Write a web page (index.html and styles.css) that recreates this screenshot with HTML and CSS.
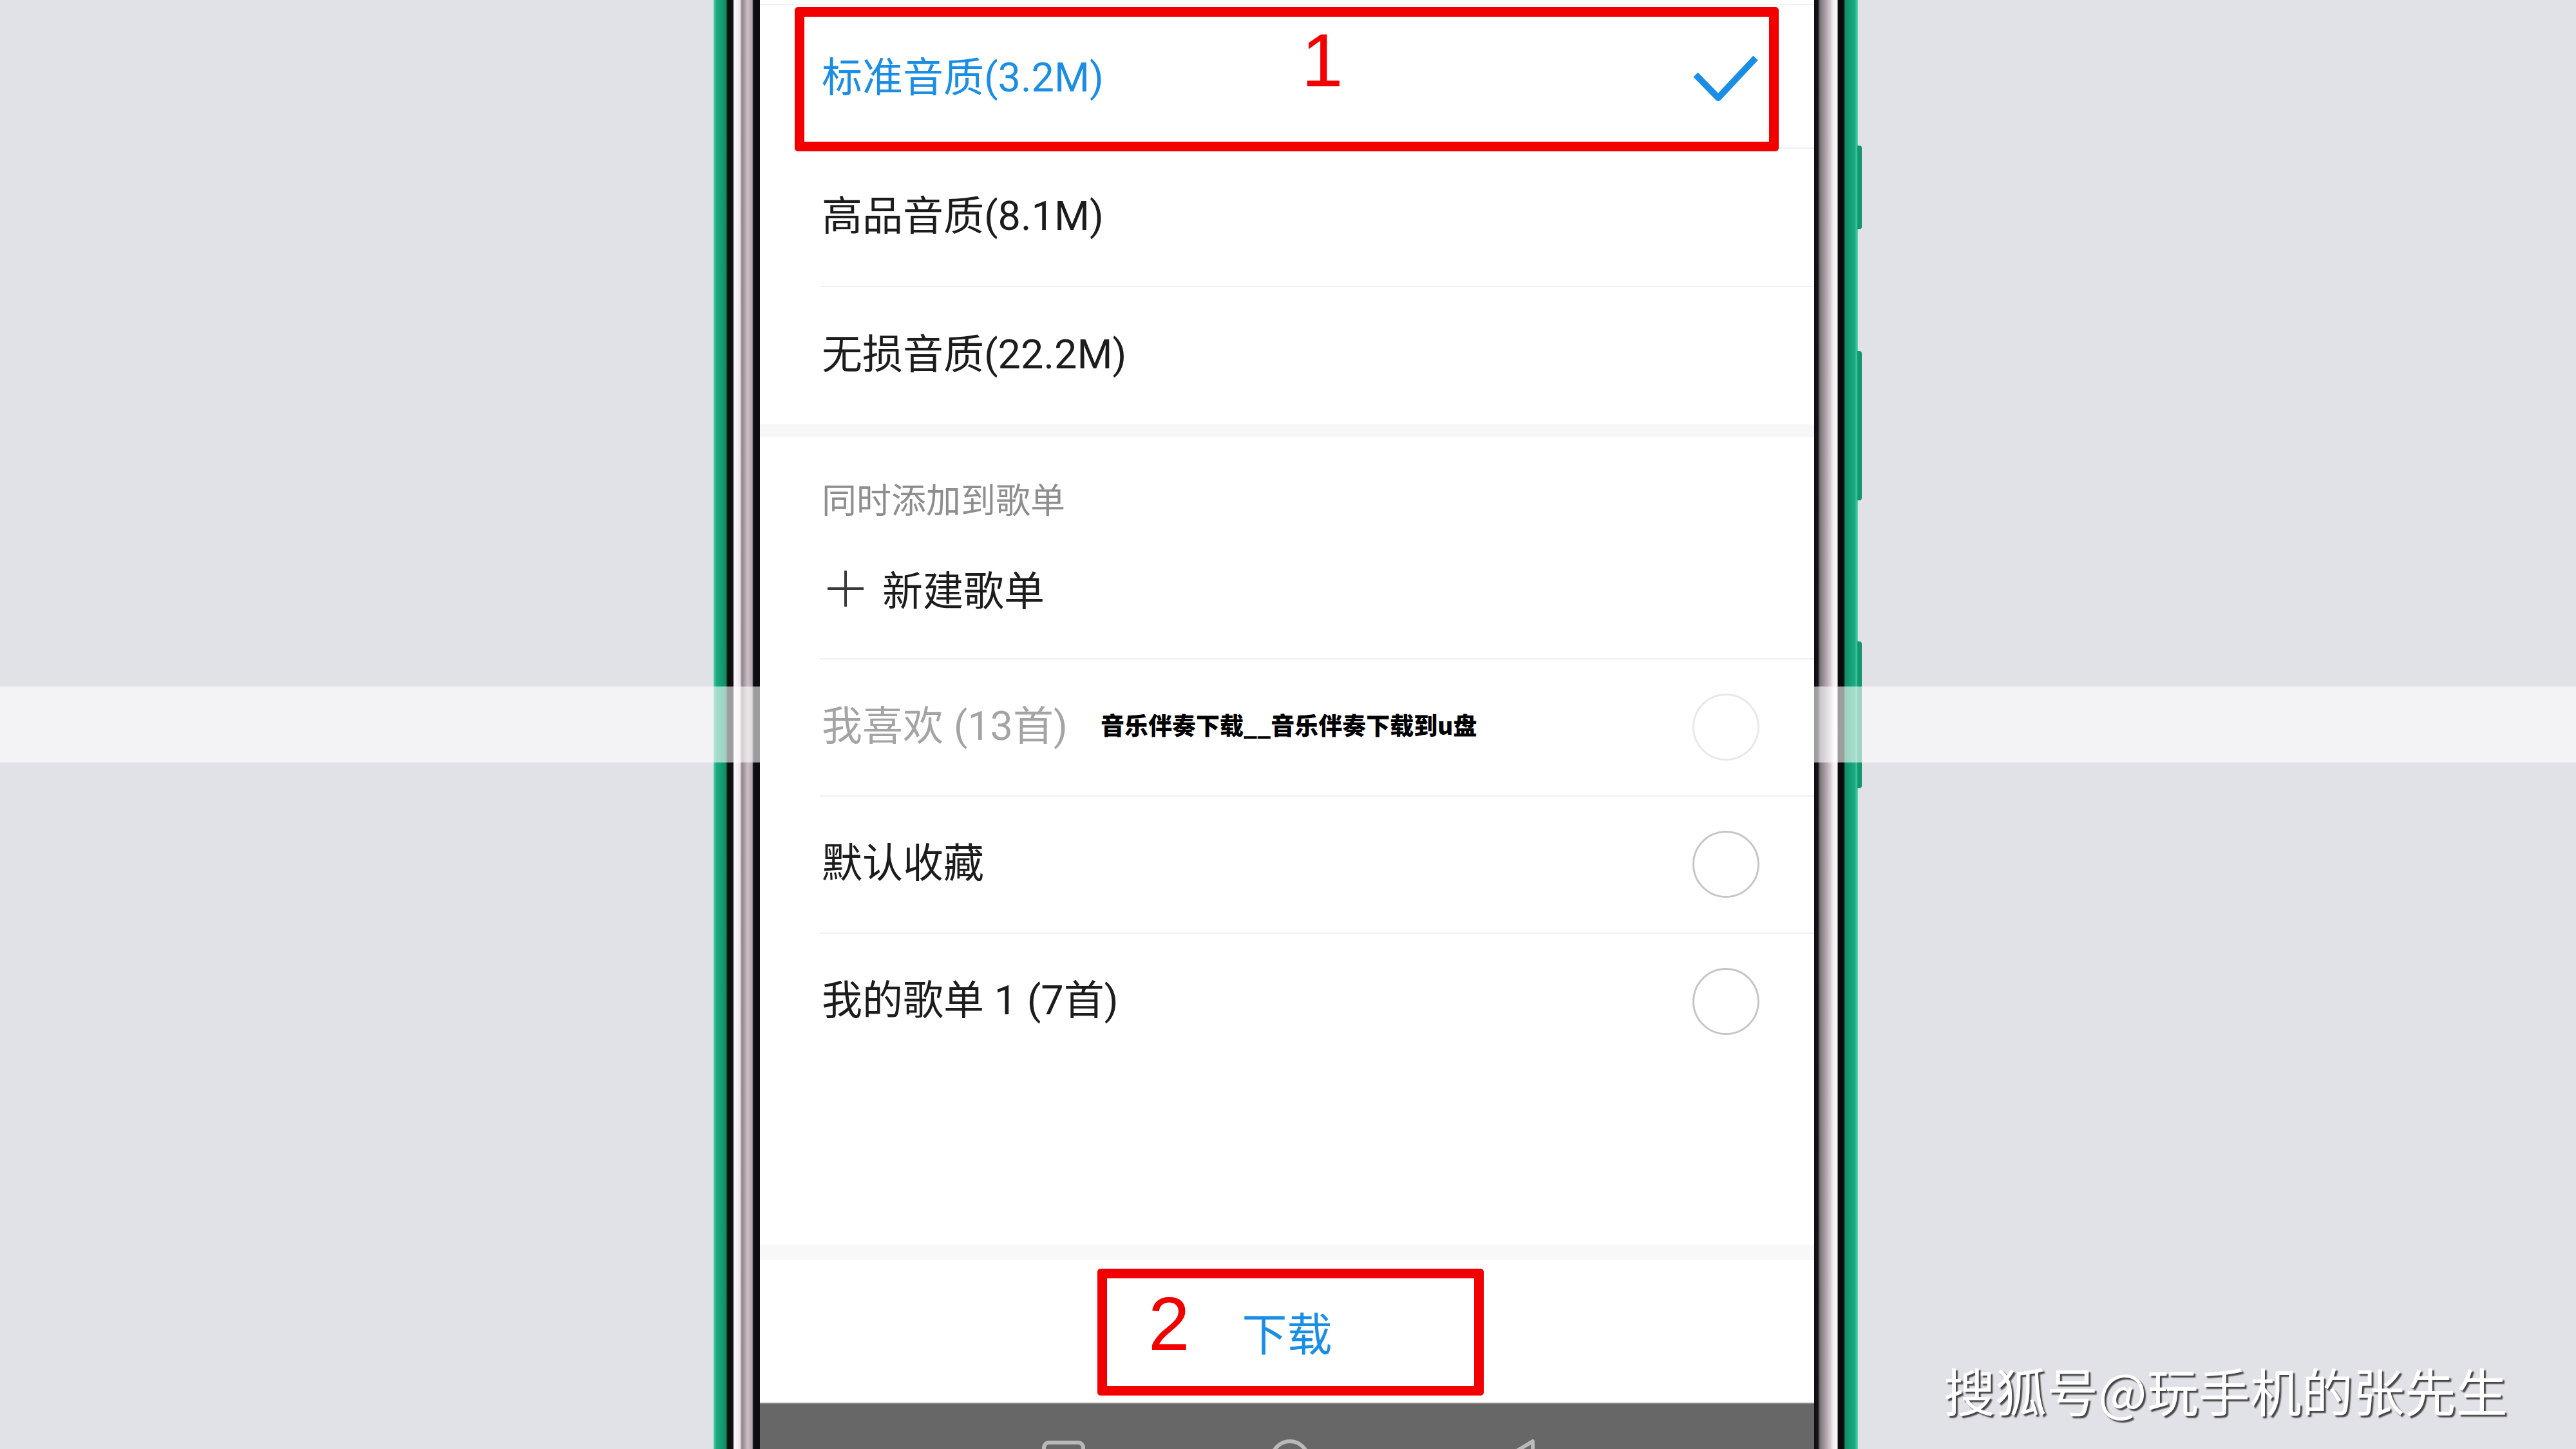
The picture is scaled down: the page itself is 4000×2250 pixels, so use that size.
FILE: index.html
```html
<!DOCTYPE html>
<html lang="zh-CN">
<head>
    <meta charset="UTF-8">
    <title>下载音质选择</title>
    <link rel="stylesheet" href="styles.css">
</head>
<body>
    <div class="stage">
        <div class="phone">
            <span class="side-key key-top"></span>
            <span class="side-key key-mid"></span>
            <span class="side-key key-low"></span>

            <div class="screen">
                <div class="quality-list">
                    <div class="row selected">
                        <span class="label">标准音质(3.2M)</span>
                        <svg class="check" width="101" height="71" viewBox="0 0 101 71">
                            <polyline points="4,30 39,66 97,4" fill="none" stroke="#1a8de4" stroke-width="10" stroke-linejoin="round"/>
                        </svg>
                    </div>
                    <div class="row"><span class="label">高品音质(8.1M)</span></div>
                    <div class="row"><span class="label">无损音质(22.2M)</span></div>

                    <div class="mark mark-one"><span class="mark-num">1</span></div>
                </div>

                <div class="divider"></div>

                <div class="playlists">
                    <div class="section-title">同时添加到歌单</div>
                    <div class="new-list">
                        <svg class="plus" width="60" height="60" viewBox="0 0 60 60">
                            <path d="M30 2 V58 M2 30 H58" stroke="#3a3a3a" stroke-width="4"/>
                        </svg>
                        <span class="label">新建歌单</span>
                    </div>
                    <div class="row list-row">
                        <span class="label">我喜欢 (13首)</span>
                        <span class="radio"></span>
                    </div>
                    <div class="row list-row">
                        <span class="label">默认收藏</span>
                        <span class="radio"></span>
                    </div>
                    <div class="row list-row">
                        <span class="label">我的歌单 1 (7首)</span>
                        <span class="radio"></span>
                    </div>
                </div>

                <div class="spacer"></div>
                <div class="divider bottom"></div>

                <div class="action">
                    <span class="download">下载</span>
                    <div class="mark mark-two"><span class="mark-num">2</span></div>
                </div>

                <div class="navbar">
                    <svg class="nav-icon nav-square" width="67" height="67" viewBox="0 0 67 67">
                        <rect x="3" y="3" width="61" height="61" rx="8" fill="none" stroke="#b9b9b9" stroke-width="6"/>
                    </svg>
                    <svg class="nav-icon nav-circle" width="62" height="62" viewBox="0 0 62 62">
                        <circle cx="31" cy="31" r="28" fill="none" stroke="#b9b9b9" stroke-width="6"/>
                    </svg>
                    <svg class="nav-icon nav-back" width="56" height="64" viewBox="0 0 56 64">
                        <polygon points="52,3 52,61 4,32" fill="none" stroke="#b9b9b9" stroke-width="6" stroke-linejoin="round"/>
                    </svg>
                </div>
            </div>
        </div>

        <div class="caption-band">
            <span class="caption">音乐伴奏下载__音乐伴奏下载到u盘</span>
        </div>

        <div class="watermark">搜狐号@玩手机的张先生</div>
    </div>
</body>
</html>
```

FILE: styles.css
```css
body {
    margin: 0;
    background-color: #e1e2e7;
    font-family: Roboto, "Noto Sans CJK SC", sans-serif;
}

.stage {
    position: relative;
    width: 4000px;
    height: 2250px;
    overflow: hidden;
}

/* phone body with its layered bezel */
.phone {
    position: relative;
    box-sizing: border-box;
    width: 1777px;
    height: 2250px;
    margin-left: 1108px;
    padding: 0 68px 0 72px;
    background: linear-gradient(to right,
        #55d6b2 0px, #1cab82 4px, #0f8e67 19px, #0a0a0a 22px, #111 30px,
        #fbf7fa 32px, #efe6ec 41px, #8f8389 44px, #cbbfc7 53px, #b3a6ae 60px,
        #0c0c12 62px, #0c0c12 72px, #fff 72px,
        #fff 1709px, #0c0c12 1709px, #17151c 1715px, #7d7278 1718px,
        #d3c8cf 1734px, #f5eff3 1739px, #fbf7fa 1745px, #0a0a0a 1746px,
        #0a0a0a 1755px, #0f8e67 1757px, #1cab82 1772px, #55d6b2 1777px);
}

.side-key {
    position: absolute;
    right: -6px;
    width: 7px;
    background-color: #13976f;
    border-radius: 0 4px 4px 0;
}

.key-top { top: 226px; height: 130px; }
.key-mid { top: 545px; height: 232px; }
.key-low { top: 996px; height: 228px; }

.screen {
    display: flex;
    flex-direction: column;
    height: 2250px;
    background-color: #fff;
}

/* rows */
.row {
    position: relative;
    display: flex;
    align-items: center;
    justify-content: space-between;
    padding: 0 85px 0 96px;
}

.row + .row::before {
    content: "";
    position: absolute;
    top: 0;
    left: 93px;
    right: 0;
    height: 2px;
    background-color: #f0f0f0;
}

.label {
    margin-bottom: 14px;
    font-size: 63px;
    color: #1c1c1c;
    white-space: nowrap;
}

.quality-list {
    position: relative;
    padding-top: 6px;
    border-top: 2px solid #f2f2f2;
    margin-top: 6px;
}

.quality-list .row {
    height: 215px;
    padding-right: 87px;
}

.quality-list .row:first-child {
    height: 215px;
}

.selected .label {
    color: #1a8de4;
}

.divider {
    height: 20px;
    background-color: #f7f7f7;
}

.divider.bottom {
    height: 24px;
    background-color: #f8f8f8;
}

.section-title {
    padding: 62px 0 0 96px;
    line-height: 76px;
    font-size: 54px;
    color: #8e8e8e;
}

.new-list {
    display: flex;
    align-items: center;
    gap: 27px;
    height: 205px;
    padding-left: 103px;
}

.plus {
    margin-bottom: 12px;
}

.list-row {
    height: 213px;
}

.list-row:first-of-type::before,
.new-list + .list-row::before {
    content: "";
    position: absolute;
    top: 0;
    left: 93px;
    right: 0;
    height: 2px;
    background-color: #f0f0f0;
}

.radio {
    box-sizing: border-box;
    width: 104px;
    height: 104px;
    border: 3px solid #c6c6c6;
    border-radius: 50%;
}

.spacer {
    flex: 1;
}

.action {
    position: relative;
    display: flex;
    justify-content: center;
    align-items: center;
    height: 221px;
}

.download {
    font-size: 70px;
    color: #1a8de4;
}

.navbar {
    display: flex;
    align-items: flex-start;
    height: 72px;
    box-sizing: border-box;
    padding: 55px 0 0 438px;
    overflow: hidden;
    background-color: #676767;
    border-top: 2px solid #8a8a8a;
}

.nav-square { margin-top: 2px; }
.nav-circle { margin-left: 287px; }
.nav-back { margin-left: 294px; }

/* red annotation boxes */
.mark {
    position: absolute;
    box-sizing: border-box;
    border: 15px solid #f20000;
    border-radius: 5px;
}

.mark-num {
    position: absolute;
    font-family: "Liberation Sans", Arial, sans-serif;
    font-size: 116px;
    line-height: 116px;
    color: #f20000;
}

.mark-one {
    left: 54px;
    top: 3px;
    width: 1528px;
    height: 224px;
}

.mark-one .mark-num {
    left: 772px;
    top: 10px;
}

.mark-two {
    left: 524px;
    top: 13px;
    width: 600px;
    height: 197px;
}

.mark-two .mark-num {
    left: 64px;
    top: 13px;
}

/* translucent caption strip across the picture */
.caption-band {
    position: absolute;
    left: 0;
    top: 1066px;
    width: 4000px;
    height: 118px;
    display: flex;
    align-items: center;
    padding-left: 1709px;
    box-sizing: border-box;
    background-color: rgba(255, 255, 255, 0.6);
}

.caption {
    font-family: "Noto Sans CJK SC", sans-serif;
    font-size: 37px;
    font-weight: 900;
    color: #000;
}

.watermark {
    position: absolute;
    left: 3018px;
    top: 2117px;
    font-family: "Noto Sans CJK SC", sans-serif;
    font-size: 80px;
    line-height: 1;
    color: #fff;
    text-shadow: 3px 3px 2px rgba(0, 0, 0, 0.7);
}
```
